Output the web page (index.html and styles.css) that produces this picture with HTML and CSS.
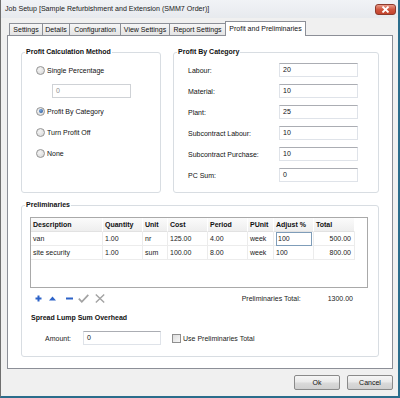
FILE: index.html
```html
<!DOCTYPE html>
<html>
<head>
<meta charset="utf-8">
<link rel="stylesheet" href="styles.css">
</head>
<body>
<div class="window">
  <div class="titlebar">
    <span class="title">Job Setup [Sample Refurbishment and Extension (SMM7 Order)]</span>
    <span class="close"><svg width="9" height="7" viewBox="0 0 9 7"><path d="M1.5 0.5 L7.5 6.5 M7.5 0.5 L1.5 6.5" stroke="#fff" stroke-width="1.8"/></svg></span>
  </div>
  <div class="client">
    <div class="tabs">
      <div class="tab t-settings">Settings</div>
      <div class="tab t-details">Details</div>
      <div class="tab t-config">Configuration</div>
      <div class="tab t-view">View Settings</div>
      <div class="tab t-report">Report Settings</div>
      <div class="tab t-profit active">Profit and Preliminaries</div>
    </div>
    <div class="panel">
      <div class="top-groups">
        <fieldset class="group g-method">
          <legend>Profit Calculation Method</legend>
          <div class="gbody method-body">
            <div class="radio-row"><span class="radio"></span>Single Percentage</div>
            <div class="input pct-input disabled">0</div>
            <div class="radio-row r-gap6"><span class="radio checked"></span>Profit By Category</div>
            <div class="radio-row"><span class="radio"></span>Turn Profit Off</div>
            <div class="radio-row"><span class="radio"></span>None</div>
          </div>
        </fieldset>
        <fieldset class="group g-cat">
          <legend>Profit By Category</legend>
          <div class="gbody cat-body">
            <div class="cat-row"><span class="cat-label">Labour:</span><span class="input cat-input">20</span></div>
            <div class="cat-row"><span class="cat-label">Material:</span><span class="input cat-input">10</span></div>
            <div class="cat-row"><span class="cat-label">Plant:</span><span class="input cat-input">25</span></div>
            <div class="cat-row"><span class="cat-label">Subcontract Labour:</span><span class="input cat-input">10</span></div>
            <div class="cat-row"><span class="cat-label">Subcontract Purchase:</span><span class="input cat-input">10</span></div>
            <div class="cat-row"><span class="cat-label">PC Sum:</span><span class="input cat-input">0</span></div>
          </div>
        </fieldset>
      </div>
      <fieldset class="group g-prelim">
        <legend>Preliminaries</legend>
        <div class="gbody prelim-body">
          <div class="grid">
            <div class="grow head">
              <span class="c c1">Description</span><span class="c c2">Quantity</span><span class="c c3">Unit</span><span class="c c4">Cost</span><span class="c c5">Period</span><span class="c c6">PUnit</span><span class="c c7">Adjust %</span><span class="c c8">Total</span>
            </div>
            <div class="grow">
              <span class="c c1">van</span><span class="c c2">1.00</span><span class="c c3">nr</span><span class="c c4">125.00</span><span class="c c5">4.00</span><span class="c c6">week</span><span class="c c7 editing"><span class="cell-edit">100</span></span><span class="c c8 num">500.00</span>
            </div>
            <div class="grow">
              <span class="c c1">site security</span><span class="c c2">1.00</span><span class="c c3">sum</span><span class="c c4">100.00</span><span class="c c5">8.00</span><span class="c c6">week</span><span class="c c7">100</span><span class="c c8 num">800.00</span>
            </div>
          </div>
          <div class="toolbar">
            <span class="ic ic-add"><svg width="7" height="7" viewBox="0 0 7 7"><path d="M3.5 0.5 V6.5 M0.5 3.5 H6.5" stroke="#2d63c8" stroke-width="2"/></svg></span>
            <span class="ic ic-up"><svg width="7" height="5" viewBox="0 0 7 5"><path d="M3.5 0.5 L7 4.5 L0 4.5 Z" fill="#2d63c8"/></svg></span>
            <span class="ic ic-del"><svg width="7" height="3" viewBox="0 0 7 3"><rect x="0" y="0.5" width="7" height="2" fill="#2d63c8"/></svg></span>
            <span class="ic ic-ok"><svg width="11" height="9" viewBox="0 0 11 9"><path d="M0.8 4.6 L3.8 7.8 L10.3 0.8" fill="none" stroke="#a3a3a3" stroke-width="1.7"/></svg></span>
            <span class="ic ic-cancel"><svg width="10" height="9" viewBox="0 0 10 9"><path d="M0.8 0.5 L9.2 8.5 M9.2 0.5 L0.8 8.5" stroke="#a3a3a3" stroke-width="1.4"/></svg></span>
            <span class="total-label">Preliminaries Total:</span>
            <span class="total-value">1300.00</span>
          </div>
          <div class="sub-title">Spread Lump Sum Overhead</div>
          <div class="amount-row">
            <span class="amount-label">Amount:</span>
            <span class="input amount-input">0</span>
            <span class="checkbox"></span>
            <span class="check-label">Use Preliminaries Total</span>
          </div>
        </div>
      </fieldset>
    </div>
    <div class="buttons">
      <span class="btn">Ok</span>
      <span class="btn">Cancel</span>
    </div>
  </div>
</div>
</body>
</html>
```

FILE: styles.css
```css
html, body {
  margin: 0;
  padding: 0;
}
body {
  width: 400px;
  height: 398px;
  overflow: hidden;
  font-family: "Liberation Sans", Arial, sans-serif;
  font-size: 7px;
  color: #000;
  background: #f0f0f0;
}
.window {
  box-sizing: border-box;
  width: 400px;
  height: 398px;
  border-left: 1px solid #6f6f6f;
  border-right: 2px solid #2b6d8c;
  border-bottom: 2px solid #2b6d8c;
  background: #f0f0f0;
  display: flex;
  flex-direction: column;
}
.titlebar {
  height: 18px;
  flex: none;
  display: flex;
  align-items: center;
  justify-content: space-between;
  padding: 0 2px 0 4px;
  background: linear-gradient(#f1f3f6, #e7eaee);
}
.title {
  font-size: 7.1px;
  color: #1a1a1a;
}
.close {
  width: 21px;
  height: 11px;
  box-sizing: border-box;
  border: 1px solid #8d3a2c;
  border-radius: 3px;
  background: linear-gradient(#e89a88, #d0563f 50%, #c2432d);
  display: flex;
  align-items: center;
  justify-content: center;
}
.close svg { display: block; }
.client {
  flex: 1;
  display: flex;
  flex-direction: column;
  padding: 3px 5px 0 6px;
}
.tabs {
  height: 14px;
  display: flex;
  align-items: flex-end;
  padding-left: 2px;
}
.tab {
  box-sizing: border-box;
  height: 12px;
  line-height: 11px;
  text-align: center;
  border: 1px solid #8c8f97;
  border-bottom: none;
  border-right: none;
  background: linear-gradient(#f6f6f6, #e4e4e4);
  color: #111;
  white-space: nowrap;
}
.t-settings { width: 33px; }
.t-details { width: 27px; }
.t-config { width: 51px; }
.t-view { width: 49px; }
.t-report { width: 56px; }
.tab.active {
  width: 81px;
  height: 15px;
  line-height: 13px;
  border-right: 1px solid #8c8f97;
  background: #fff;
  margin-bottom: -1px;
  position: relative;
  z-index: 1;
}
.panel {
  box-sizing: border-box;
  height: 334px;
  border: 1px solid #8c8f97;
  background: #fff;
  padding: 11px 0 0 13px;
}
.top-groups {
  display: flex;
  gap: 12px;
}
fieldset.group {
  box-sizing: border-box;
  margin: 0;
  min-width: 0;
  border: 1px solid #d8dde2;
  border-radius: 3px;
  padding: 0;
}
fieldset.group legend {
  padding: 0 1px;
  margin-left: 3px;
  font-weight: bold;
  line-height: 10px;
  color: #111;
}
.g-method {
  width: 140px;
  height: 146px;
}
.g-cat {
  width: 206px;
  height: 146px;
}
.method-body,
.cat-body {
  padding: 6px 0 0 14px;
}
.radio-row {
  display: flex;
  align-items: center;
  gap: 2px;
  height: 14px;
  margin-bottom: 7px;
  color: #111;
}
.r-gap6 { margin-top: -1px; }
.radio {
  box-sizing: border-box;
  width: 9px;
  height: 9px;
  border-radius: 50%;
  border: 1px solid #949494;
  background: radial-gradient(circle at 40% 35%, #f4f4f4, #d6d6d6);
  display: flex;
  align-items: center;
  justify-content: center;
}
.radio.checked::after {
  content: "";
  width: 4px;
  height: 4px;
  border-radius: 50%;
  background: radial-gradient(circle at 40% 35%, #7aa6dc, #1f4f92);
}
.input {
  box-sizing: border-box;
  height: 14px;
  line-height: 12px;
  padding-left: 3px;
  border: 1px solid #dfe3e9;
  border-top-color: #abadb3;
  background: #fff;
  color: #111;
  display: block;
}
.pct-input {
  width: 79px;
  margin: 0 0 7px 16px;
}
.input.disabled {
  color: #8d8d8d;
  border-color: #cfd2d6;
}
.cat-row {
  display: flex;
  align-items: center;
  height: 14px;
  margin-bottom: 7px;
}
.cat-label {
  width: 91px;
  color: #111;
}
.cat-input {
  width: 79px;
}
.g-prelim {
  width: 358px;
  height: 157px;
  margin-top: 7px !important;
}
.prelim-body {
  padding: 7px 0 0 8px;
}
.grid {
  box-sizing: border-box;
  width: 338px;
  height: 71px;
  border: 1px solid #a9a9a9;
  background: #fff;
}
.grow {
  display: flex;
  height: 14px;
  line-height: 13px;
}
.grow .c {
  box-sizing: border-box;
  height: 14px;
  padding-left: 2px;
  border-right: 1px solid #ececec;
  border-bottom: 1px solid #ececec;
  white-space: nowrap;
  color: #222;
}
.grow.head .c {
  font-weight: bold;
  color: #111;
  background: linear-gradient(#fbfbfb, #eeeeee);
  border-right: 1px solid #fff;
  border-bottom: 1px solid #e2e2e2;
}
.c1 { width: 72px; }
.c2 { width: 40px; }
.c3 { width: 25px; }
.c4 { width: 40px; }
.c5 { width: 40px; }
.c6 { width: 26px; }
.c7 { width: 40px; }
.c8 { width: 41px; }
.grow .num {
  text-align: right;
  padding-left: 0;
  padding-right: 3px;
}
.grow .c.editing {
  padding: 0 1px 0 2px;
}
.cell-edit {
  display: block;
  box-sizing: border-box;
  height: 14px;
  line-height: 12px;
  padding-left: 1px;
  border: 1px solid #7f9db9;
  background: #fff;
}
.toolbar {
  display: flex;
  align-items: center;
  width: 338px;
  height: 12px;
  margin-top: 4px;
  padding-left: 5px;
  box-sizing: border-box;
}
.ic {
  display: flex;
  align-items: center;
}
.ic svg { display: block; }
.ic-up { margin-left: 7px; }
.ic-del { margin-left: 10px; }
.ic-ok { margin-left: 5px; }
.ic-cancel { margin-left: 6px; }
.total-label {
  margin-left: auto;
  color: #222;
}
.total-value {
  margin-left: 27px;
  margin-right: 15px;
  color: #222;
}
.sub-title {
  font-weight: bold;
  line-height: 10px;
  margin-top: 9px;
  margin-left: 1px;
  color: #111;
}
.amount-row {
  display: flex;
  align-items: center;
  height: 14px;
  margin-top: 8px;
  margin-left: 15px;
}
.amount-label {
  width: 38px;
  color: #222;
}
.amount-input {
  width: 78px;
}
.checkbox {
  box-sizing: border-box;
  width: 9px;
  height: 9px;
  margin-left: 11px;
  border: 1px solid #8f8f8f;
  background: linear-gradient(135deg, #dcdcdc, #f7f7f7);
}
.check-label {
  margin-left: 2px;
  color: #222;
}
.buttons {
  display: flex;
  justify-content: flex-end;
  gap: 7px;
  margin-top: 6px;
}
.btn {
  box-sizing: border-box;
  width: 46px;
  height: 15px;
  line-height: 13px;
  text-align: center;
  border: 1px solid #8a8a8a;
  border-radius: 2px;
  background: linear-gradient(#f6f6f6, #e9e9e9 48%, #dadada 52%, #cfcfcf);
  color: #111;
}
```
